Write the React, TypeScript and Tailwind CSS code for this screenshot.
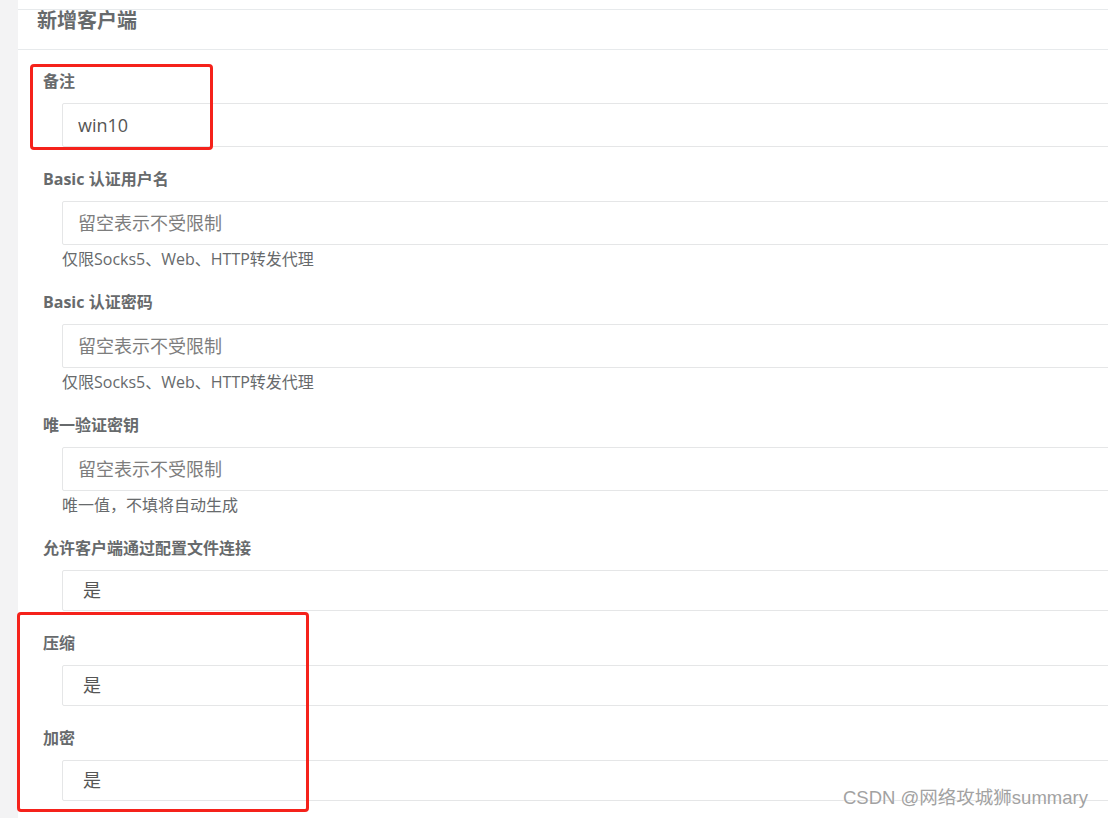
type Field = {
  label: string
  value?: string
  placeholder?: string
  help?: string
  select?: string
}

const FIELDS: Field[] = [
  { label: '备注', value: 'win10' },
  { label: 'Basic 认证用户名', placeholder: '留空表示不受限制', help: '仅限Socks5、Web、HTTP转发代理' },
  { label: 'Basic 认证密码', placeholder: '留空表示不受限制', help: '仅限Socks5、Web、HTTP转发代理' },
  { label: '唯一验证密钥', placeholder: '留空表示不受限制', help: '唯一值，不填将自动生成' },
  { label: '允许客户端通过配置文件连接', select: '是' },
  { label: '压缩', select: '是' },
  { label: '加密', select: '是' },
]

function FormGroup({ f }: { f: Field }) {
  return (
    <div className="mb-[22px]">
      <label className="block pl-[25px] text-[16px] font-bold leading-5 text-[#676a6c]">{f.label}</label>
      {f.select ? (
        <select
          defaultValue={f.select}
          className="ml-[44px] mt-[12px] block h-[41px] w-[1100px] appearance-none rounded-[2px] border border-[#e5e6e7] bg-white pl-[20px] text-[18px] text-[#555]"
        >
          <option>是</option>
          <option>否</option>
        </select>
      ) : (
        <input
          readOnly
          defaultValue={f.value}
          placeholder={f.placeholder}
          className="ml-[44px] mt-[12px] block h-[44px] w-[1100px] rounded-[2px] border border-[#e5e6e7] bg-white px-[15px] text-[18px] text-[#555] outline-none placeholder:text-[#7d7d7d]"
        />
      )}
      {f.help && (
        <p className="ml-[44px] mt-[3px] text-[16px] leading-[22px] text-[#676a6c]">{f.help}</p>
      )}
    </div>
  )
}

export default function App() {
  return (
    <div className="relative flex h-[818px] w-[1108px] overflow-hidden bg-white font-['Open_Sans','Noto_Sans_CJK_SC',sans-serif]">
      <div className="w-[18px] shrink-0 bg-[#f3f3f4]" />
      <div className="min-w-0 flex-1">
        <div className="mt-[9px] border-t border-[#e7eaec]">
          <div className="h-[40px] border-b border-[#e7eaec] pl-[19px]">
            <h5 className="text-[20px] font-bold leading-[22px] text-[#676a6c]">新增客户端</h5>
          </div>
          <form className="pt-[21px]">
            {FIELDS.map((f) => (
              <FormGroup key={f.label} f={f} />
            ))}
          </form>
        </div>
      </div>

      {/* 标注框 */}
      <div className="pointer-events-none absolute left-[30px] top-[64px] h-[86px] w-[183px] rounded-[4px] border-[3px] border-[#f5221b]" />
      <div className="pointer-events-none absolute left-[17px] top-[612px] h-[200px] w-[292px] rounded-[4px] border-[3px] border-[#f5221b]" />

      {/* 水印 */}
      <div className="absolute left-[843px] top-[786px] whitespace-nowrap font-['Liberation_Sans','Noto_Sans_CJK_SC',sans-serif] text-[18.5px] leading-[24px] text-[#a2a2a2] [text-shadow:0_0_2px_#fff,0_0_1px_#fff]">
        CSDN @网络攻城狮summary
      </div>
    </div>
  )
}
